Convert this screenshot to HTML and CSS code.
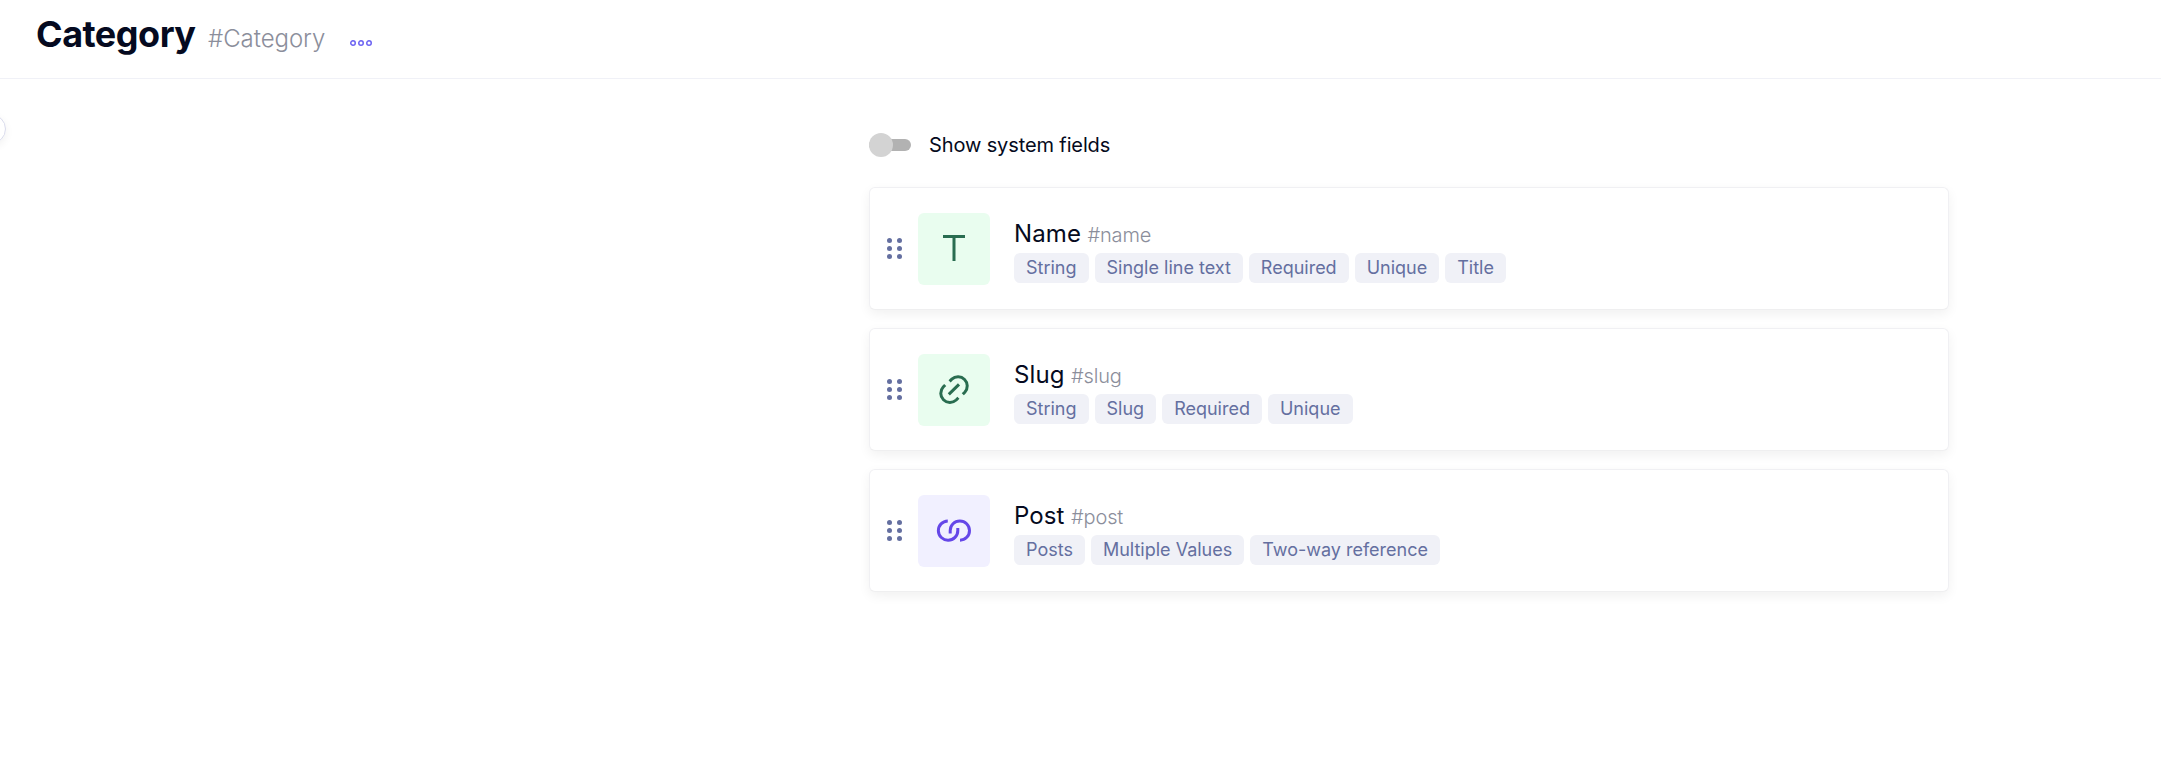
FILE: index.html
```html
<!DOCTYPE html>
<html lang="en">
<head>
<meta charset="utf-8">
<title>Category</title>
<link rel="stylesheet" href="styles.css">
</head>
<body>
<header class="header">
  <h1 class="title">Category</h1>
  <span class="api-id">#Category</span>
  <svg class="more" width="24" height="8" viewBox="0 0 24 8"><circle cx="4" cy="4" r="2.25"/><circle cx="12" cy="4" r="2.25"/><circle cx="20" cy="4" r="2.25"/></svg>
</header>
<div class="collapse"></div>
<main class="content">
  <label class="toggle"><span class="switch"><span class="track"></span><span class="thumb"></span></span><span class="toggle-text">Show system fields</span></label>
  <article class="card">
    <svg class="grip" width="16" height="22" viewBox="0 0 16 22"><circle cx="2.5" cy="2.5" r="2.5"/><circle cx="12.5" cy="2.5" r="2.5"/><circle cx="2.5" cy="10.5" r="2.5"/><circle cx="12.5" cy="10.5" r="2.5"/><circle cx="2.5" cy="18.5" r="2.5"/><circle cx="12.5" cy="18.5" r="2.5"/></svg>
    <div class="tile green"><svg width="36" height="36" viewBox="0 0 36 36"><path d="M7 5.5H29M18 5.5V30"/></svg></div>
    <div class="info">
      <div class="heading"><span class="name">Name</span><span class="field-id">#name</span></div>
      <div class="tags"><span class="tag">String</span><span class="tag">Single line text</span><span class="tag">Required</span><span class="tag">Unique</span><span class="tag">Title</span></div>
    </div>
  </article>
  <article class="card">
    <svg class="grip" width="16" height="22" viewBox="0 0 16 22"><circle cx="2.5" cy="2.5" r="2.5"/><circle cx="12.5" cy="2.5" r="2.5"/><circle cx="2.5" cy="10.5" r="2.5"/><circle cx="12.5" cy="10.5" r="2.5"/><circle cx="2.5" cy="18.5" r="2.5"/><circle cx="12.5" cy="18.5" r="2.5"/></svg>
    <div class="tile green"><svg width="36" height="36" viewBox="0 0 36 36"><path d="M12.8 22.4L23 12.4M13.6 9.4L15.8 7.2A9.2 9.2 0 0 1 28.8 20.2L26.8 22.2M9.2 13L7.2 15A9.2 9.2 0 0 0 20.2 28L22.4 25.8"/></svg></div>
    <div class="info">
      <div class="heading"><span class="name">Slug</span><span class="field-id">#slug</span></div>
      <div class="tags"><span class="tag">String</span><span class="tag">Slug</span><span class="tag">Required</span><span class="tag">Unique</span></div>
    </div>
  </article>
  <article class="card">
    <svg class="grip" width="16" height="22" viewBox="0 0 16 22"><circle cx="2.5" cy="2.5" r="2.5"/><circle cx="12.5" cy="2.5" r="2.5"/><circle cx="2.5" cy="10.5" r="2.5"/><circle cx="12.5" cy="10.5" r="2.5"/><circle cx="2.5" cy="18.5" r="2.5"/><circle cx="12.5" cy="18.5" r="2.5"/></svg>
    <div class="tile violet"><svg width="36" height="36" viewBox="0 0 36 36"><path d="M11.8 7.9A9.6 9.6 0 0 0 12.2 27.2A9.6 9.6 0 0 0 21.8 17.5V15M24 27.2A9.6 9.6 0 0 0 23.8 8A9.6 9.6 0 0 0 14.2 17.6V20.5"/></svg></div>
    <div class="info">
      <div class="heading"><span class="name">Post</span><span class="field-id">#post</span></div>
      <div class="tags"><span class="tag">Posts</span><span class="tag">Multiple Values</span><span class="tag">Two-way reference</span></div>
    </div>
  </article>
</main>
</body>
</html>
```
FILE: styles.css
```css
* { box-sizing: border-box; }
body { margin: 0; height: 771px; overflow: hidden; background: #fff; color: #050a20; font-family: Inter, sans-serif; }
.header { display: flex; align-items: baseline; height: 79px; padding: 12px 0 0 36px; border-bottom: 1px solid #f0f1f7; }
.title { margin: 0; font-size: 36px; line-height: 44px; font-weight: 700; letter-spacing: -0.5px; }
.api-id { margin-left: 12.5px; font-size: 24px; line-height: 30px; font-weight: 300; letter-spacing: -0.05px; color: #8b8e9b; }
.more { margin: 0 0 3px 24px; fill: none; stroke: #6c63f2; stroke-width: 1.5; }
.collapse { position: absolute; left: -24px; top: 114px; width: 30px; height: 30px; border: 1px solid #d9dbec; border-radius: 50%; box-shadow: 0 3px 8px rgba(0,0,0,.06); }
.content { width: 1080px; margin: 0 0 0 869px; padding-top: 51px; display: flex; flex-direction: column; gap: 18px; }
.toggle { display: flex; align-items: center; height: 30px; margin-bottom: 9px; }
.switch { display: grid; align-items: center; width: 42px; margin-right: 18px; }
.track, .thumb { grid-area: 1 / 1; }
.track { height: 12px; border-radius: 6px; background: #b2b2b2; }
.thumb { width: 24px; height: 24px; border-radius: 50%; background: #d3d3d3; }
.toggle-text { font-size: 20px; line-height: 30px; letter-spacing: -0.12px; }
.card { display: flex; align-items: center; height: 123px; padding: 1px 0 0 17px; border: 1px solid #f0f0f3; border-bottom-color: #efeff0; border-radius: 6px; background: #fff; box-shadow: 0 4px 12px rgba(0,0,0,.06); }
.grip { fill: #646fa0; margin-right: 15px; }
.tile { display: grid; place-items: center; width: 72px; height: 72px; border-radius: 6px; }
.tile svg { fill: none; stroke: currentColor; stroke-width: 3; }
.green { background: #e9fdef; color: #296d50; }
.violet { background: #f1f0ff; color: #6547e8; }
.info { margin-left: 24px; padding-top: 2px; }
.heading { display: flex; align-items: baseline; height: 33px; }
.name { font-size: 24px; line-height: 33px; letter-spacing: 0.1px; }
.field-id { margin-left: 6.5px; font-size: 20px; line-height: 30px; font-weight: 300; letter-spacing: -0.15px; color: #8b8e9b; }
.tags { display: flex; gap: 6px; margin-top: 3px; }
.tag { height: 30px; padding: 0 12px; border-radius: 6px; background: #f0f1f7; color: #646fa0; font-size: 18px; line-height: 30px; }
```
